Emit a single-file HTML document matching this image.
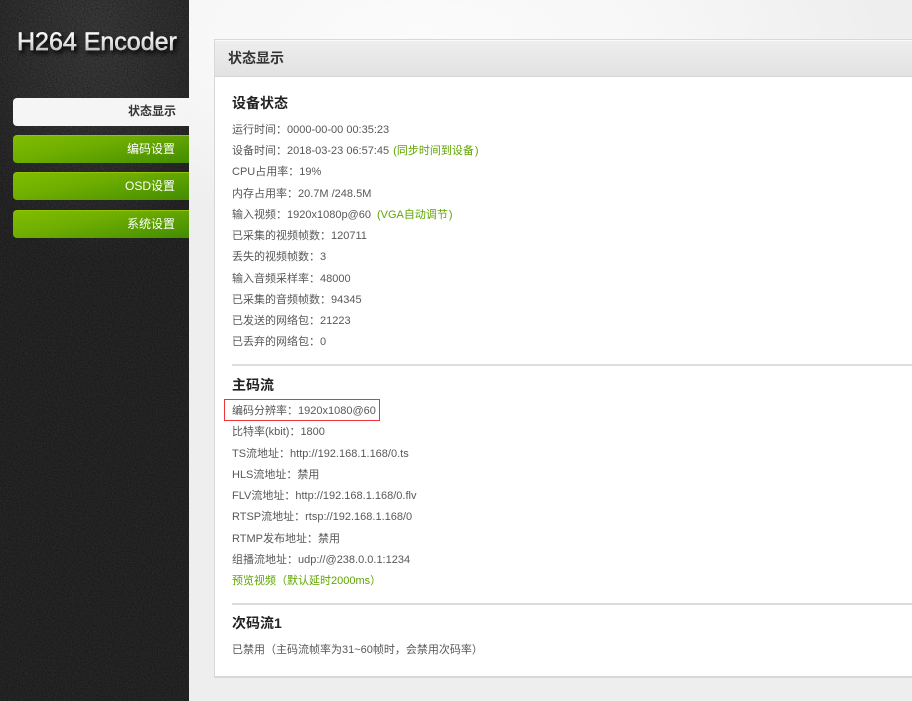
<!DOCTYPE html>
<html lang="zh"><head><meta charset="utf-8"><title>H264 Encoder</title>
<style>
html,body{margin:0;padding:0}
body{width:912px;height:701px;overflow:hidden;position:relative;background:#eee;font-family:"Liberation Sans","Noto Sans CJK SC",sans-serif;font-size:11px;color:#585858}
#glare{position:absolute;left:189px;top:0;width:723px;height:701px;background:radial-gradient(ellipse 470px 190px at 231px 40px,#fbfbfb 0,#f7f7f7 50%,#eee 100%)}
#side{position:absolute;left:0;top:0;width:189px;height:701px;background-color:#272727;background-image:radial-gradient(ellipse 135px 230px at 95px 30px,#3c3c3c 0,#313131 60%,rgba(39,39,39,0) 100%)}
#noise{position:absolute;left:0;top:0;width:189px;height:701px}
#logo{position:absolute;left:17px;top:28px;font-size:25px;line-height:29px;white-space:nowrap;color:transparent;background:linear-gradient(#fff 15%,#e4e4e4 50%,#b4b4b4 85%);-webkit-background-clip:text;background-clip:text;-webkit-text-stroke:.5px rgba(225,225,225,.75);filter:drop-shadow(2px 3px 2px #000)}
.m{position:absolute;left:13px;width:176px;height:28px;border-radius:4px 0 0 4px;box-sizing:border-box;line-height:26px;font-size:12px;color:#fff;text-align:right;padding-right:14px;border-top:1px solid #93c400;background:linear-gradient(168deg,#7fbd00 0,#6fae00 40%,#428c00 100%);white-space:nowrap}
.m.a{background:#f5f5f5;color:#333;font-weight:bold;padding-right:13px;border-top:0;line-height:27px}
#panel{position:absolute;left:214px;top:39px;width:720px;height:639px;box-sizing:border-box;border:1px solid #d8d8d8;border-width:1px 1px 2px 1px;background:#fff}
#head{position:absolute;left:0;top:0;right:0;height:37px;box-sizing:border-box;border-top:1px solid #fafafa;border-bottom:1px solid #d6d6d6;background:linear-gradient(#eee,#e2e2e2)}
.t,.h{position:absolute;white-space:nowrap}
.h{font-size:14px;font-weight:bold;color:#222;line-height:18px}
.t{left:232px;line-height:14px}
.g{color:#5fa500}
.n{margin-left:4px}
.v{margin-left:6px}
.c{margin-left:1px}
.r{position:absolute;left:232px;width:680px;height:2px;background:#ddd}
#box{position:absolute;left:224px;top:399px;width:156px;height:22px;box-sizing:border-box;border:1px solid #f0343c}
</style></head><body>
<div id="glare"></div>
<div id="side"></div>
<svg id="noise" width="189" height="701"><filter id="f" x="0" y="0" width="100%" height="100%"><feTurbulence type="fractalNoise" baseFrequency="0.8" numOctaves="2" seed="4"/><feColorMatrix type="matrix" values="0 0 0 0 0  0 0 0 0 0  0 0 0 0 0  0.9 0 0 0 -0.32"/></filter><rect width="189" height="701" filter="url(#f)"/></svg>
<div id="logo">H264 Encoder</div>
<div class="m a" style="top:98px">状态显示</div>
<div class="m" style="top:135px">编码设置</div>
<div class="m" style="top:172px">OSD设置</div>
<div class="m" style="top:210px">系统设置</div>
<div id="panel"><div id="head"></div></div>
<div class="h" style="left:228px;top:49px;color:#333">状态显示</div>
<div class="h" style="left:232px;top:94px">设备状态</div>
<div class="t" style="top:123px">运行时间：0000-00-00 00:35:23</div>
<div class="t" style="top:144px">设备时间：2018-03-23 06:57:45<span class="g n">(同步时间到设备<span class="c">)</span></span></div>
<div class="t" style="top:165px">CPU占用率：19%</div>
<div class="t" style="top:187px">内存占用率：20.7M /248.5M</div>
<div class="t" style="top:208px">输入视频：1920x1080p@60<span class="g v">(VGA自动调节<span class="c">)</span></span></div>
<div class="t" style="top:229px">已采集的视频帧数：120711</div>
<div class="t" style="top:250px">丢失的视频帧数：3</div>
<div class="t" style="top:272px">输入音频采样率：48000</div>
<div class="t" style="top:293px">已采集的音频帧数：94345</div>
<div class="t" style="top:314px">已发送的网络包：21223</div>
<div class="t" style="top:335px">已丢弃的网络包：0</div>
<div class="r" style="top:364px"></div>
<div class="h" style="left:232px;top:376px">主码流</div>
<div id="box"></div>
<div class="t" style="top:404px">编码分辨率：1920x1080@60</div>
<div class="t" style="top:425px">比特率(kbit)：1800</div>
<div class="t" style="top:447px">TS流地址：http://192.168.1.168/0.ts</div>
<div class="t" style="top:468px">HLS流地址：禁用</div>
<div class="t" style="top:489px">FLV流地址：http://192.168.1.168/0.flv</div>
<div class="t" style="top:510px">RTSP流地址：rtsp://192.168.1.168/0</div>
<div class="t" style="top:532px">RTMP发布地址：禁用</div>
<div class="t" style="top:553px">组播流地址：udp://@238.0.0.1:1234</div>
<div class="t g" style="top:574px">预览视频（默认延时2000ms）</div>
<div class="r" style="top:603px"></div>
<div class="h" style="left:232px;top:614px">次码流1</div>
<div class="t" style="top:643px">已禁用（主码流帧率为31~60帧时，会禁用次码率）</div>
</body></html>
